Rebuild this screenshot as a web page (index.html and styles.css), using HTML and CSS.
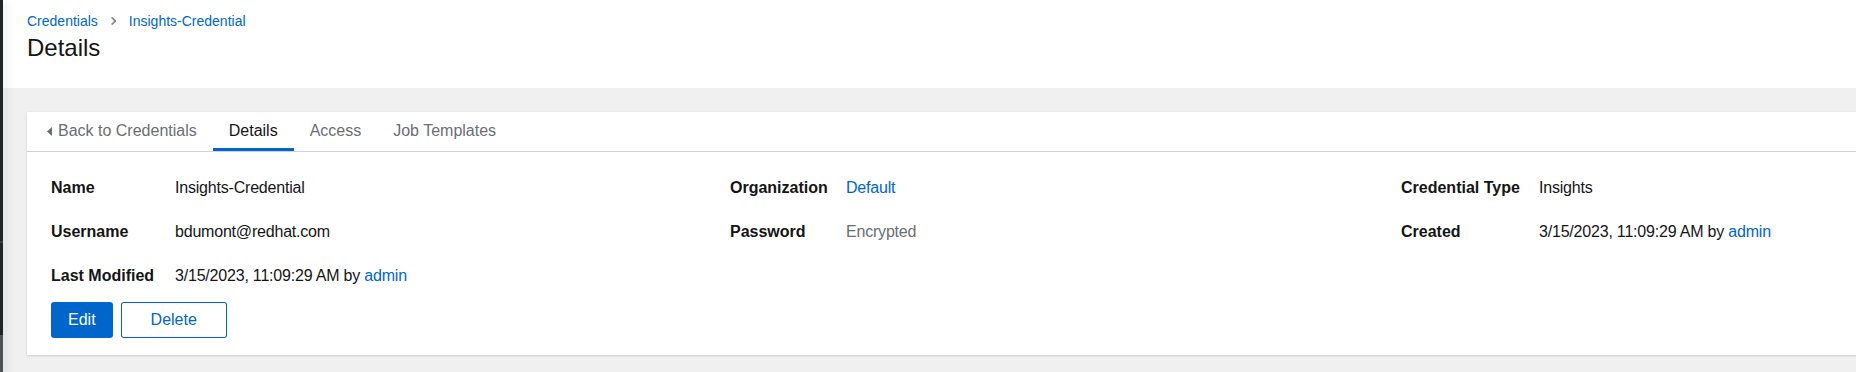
FILE: index.html
```html
<!DOCTYPE html>
<html lang="en">
<head>
    <meta charset="UTF-8">
    <meta name="viewport" content="width=device-width, initial-scale=1.0">
    <title>Credential details</title>
    <link rel="stylesheet" href="styles.css">
</head>
<body>
    <div class="layout">
        <aside class="sidebar"></aside>
        <main class="page">
            <section class="page-header">
                <nav class="breadcrumb">
                    <a href="">Credentials</a>
                    <svg class="sep" width="5" height="8" viewBox="0 0 5 8"><path d="M0.6 0.4 L4.4 4 L0.6 7.6" fill="none" stroke="#8a8d90" stroke-width="1.8"/></svg>
                    <a href="">Insights-Credential</a>
                </nav>
                <h1 class="title">Details</h1>
            </section>
            <section class="page-body">
                <div class="card">
                    <ul class="tabs">
                        <li class="tab back">
                            <svg class="caret" width="5" height="9" viewBox="0 0 5 9"><path d="M5 0 L0 4.5 L5 9 Z" fill="#6a6e73"/></svg>
                            Back to Credentials
                        </li>
                        <li class="tab active">Details</li>
                        <li class="tab">Access</li>
                        <li class="tab">Job Templates</li>
                    </ul>
                    <div class="card-body">
                        <dl class="details">
                            <div class="detail">
                                <dt>Name</dt>
                                <dd>Insights-Credential</dd>
                            </div>
                            <div class="detail">
                                <dt>Organization</dt>
                                <dd><a href="">Default</a></dd>
                            </div>
                            <div class="detail">
                                <dt>Credential Type</dt>
                                <dd>Insights</dd>
                            </div>
                            <div class="detail">
                                <dt>Username</dt>
                                <dd>bdumont@redhat.com</dd>
                            </div>
                            <div class="detail">
                                <dt>Password</dt>
                                <dd class="muted">Encrypted</dd>
                            </div>
                            <div class="detail">
                                <dt>Created</dt>
                                <dd>3/15/2023, 11:09:29 AM by <a href="">admin</a></dd>
                            </div>
                            <div class="detail">
                                <dt>Last Modified</dt>
                                <dd>3/15/2023, 11:09:29 AM by <a href="">admin</a></dd>
                            </div>
                        </dl>
                        <div class="actions">
                            <button class="btn btn-primary">Edit</button>
                            <button class="btn btn-secondary">Delete</button>
                        </div>
                    </div>
                </div>
            </section>
        </main>
    </div>
</body>
</html>
```

FILE: styles.css
```css
*{
    box-sizing: border-box;
}
body{
    margin: 0;
    height: 372px;
    overflow: hidden;
    font-family: "Liberation Sans", Arial, sans-serif;
    color: #151515;
}
a{
    color: #0066cc;
    text-decoration: none;
}
.layout{
    display: flex;
    min-height: 372px;
}
.sidebar{
    flex: none;
    width: 3px;
    position: relative;
    z-index: 1;
    background: linear-gradient(to bottom, #212427 0, #212427 241px, #3a3e42 241px, #3a3e42 243px, #212427 243px, #212427 335px, #4f5255 335px);
    box-shadow: 3px 0 8px rgba(3, 3, 3, 0.14);
}
.page{
    flex: 1;
    min-width: 0;
    overflow: hidden;
    background-color: #f0f0f0;
}
.page-header{
    background-color: #fff;
    padding: 10px 24px 25px;
}
.breadcrumb{
    display: flex;
    align-items: center;
    font-size: 14px;
    line-height: 22px;
}
.breadcrumb .sep{
    margin: 0 13px 0 13px;
}
.title{
    margin: 0;
    font-size: 24px;
    line-height: 31px;
    font-weight: 400;
}
.page-body{
    padding: 24px 0 24px 24px;
}
.card{
    width: 2100px;
    background-color: #fff;
    box-shadow: 0 1px 2px 0 rgba(3, 3, 3, 0.12), 0 0 2px 0 rgba(3, 3, 3, 0.06);
}
.tabs{
    display: flex;
    list-style: none;
    margin: 0;
    padding: 0 0 0 4px;
    border-bottom: 1px solid #d2d2d2;
}
.tab{
    display: flex;
    align-items: center;
    padding: 7px 16px 8px;
    font-size: 16px;
    line-height: 24px;
    color: #6a6e73;
}
.tab .caret{
    margin-right: 6px;
}
.tab.active{
    color: #151515;
    box-shadow: inset 0 -3px 0 #0066cc;
}
.card-body{
    padding: 24px 24px 17px 24px;
}
.details{
    display: grid;
    grid-template-columns: 679px 671px 671px;
    row-gap: 20px;
    margin: 0;
}
.detail{
    display: grid;
    grid-template-columns: 124px auto;
    font-size: 16px;
    line-height: 24px;
}
.detail:nth-child(3n+2){
    grid-template-columns: 116px auto;
}
.detail:nth-child(3n+3){
    grid-template-columns: 138px auto;
}
.detail dt{
    font-weight: 700;
}
.detail dd{
    margin: 0;
    letter-spacing: -0.2px;
}
.detail .muted{
    color: #6a6e73;
}
.actions{
    display: flex;
    gap: 8px;
    margin-top: 14px;
}
.btn{
    font-family: inherit;
    font-size: 16px;
    line-height: 24px;
    padding: 6px 17px;
    border: 0;
    border-radius: 3px;
}
.btn-primary{
    background-color: #0066cc;
    color: #fff;
}
.btn-secondary{
    background-color: #fff;
    color: #0066cc;
    padding: 6px 30px;
    box-shadow: inset 0 0 0 1px #0066cc;
}
```
